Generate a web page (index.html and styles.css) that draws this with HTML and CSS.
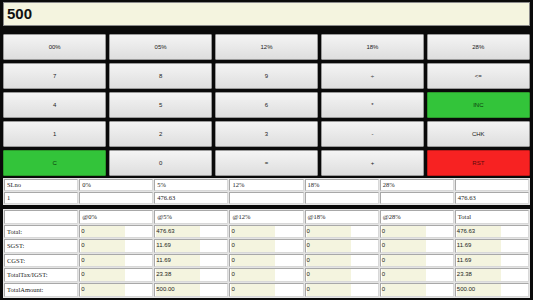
FILE: index.html
```html
<!DOCTYPE html>
<html>
<head>
<meta charset="utf-8">
<link rel="stylesheet" href="styles.css">
</head>
<body>
<div class="app">
  <div class="display">500</div>
  <div class="keys">
    <button class="key">00%</button>
    <button class="key">05%</button>
    <button class="key">12%</button>
    <button class="key">18%</button>
    <button class="key">28%</button>
    <button class="key">7</button>
    <button class="key">8</button>
    <button class="key">9</button>
    <button class="key">÷</button>
    <button class="key">&lt;=</button>
    <button class="key">4</button>
    <button class="key">5</button>
    <button class="key">6</button>
    <button class="key">*</button>
    <button class="key green">INC</button>
    <button class="key">1</button>
    <button class="key">2</button>
    <button class="key">3</button>
    <button class="key">-</button>
    <button class="key">CHK</button>
    <button class="key green">C</button>
    <button class="key">0</button>
    <button class="key">=</button>
    <button class="key">+</button>
    <button class="key red">RST</button>
  </div>
  <div class="sheet">
    <table class="grid small">
      <tr><td>SLno</td><td>0%</td><td>5%</td><td>12%</td><td>18%</td><td>28%</td><td></td></tr>
      <tr><td>1</td><td></td><td>476.63</td><td></td><td></td><td></td><td>476.63</td></tr>
    </table>
  </div>
  <div class="sheet second">
    <table class="grid big">
      <tr><td></td><td>@0%</td><td>@5%</td><td>@12%</td><td>@18%</td><td>@28%</td><td>Total</td></tr>
      <tr><td>Total:</td><td><span class="val">0</span></td><td><span class="val">476.63</span></td><td><span class="val">0</span></td><td><span class="val">0</span></td><td><span class="val">0</span></td><td><span class="val">476.63</span></td></tr>
      <tr><td>SGST:</td><td><span class="val">0</span></td><td><span class="val">11.69</span></td><td><span class="val">0</span></td><td><span class="val">0</span></td><td><span class="val">0</span></td><td><span class="val">11.69</span></td></tr>
      <tr><td>CGST:</td><td><span class="val">0</span></td><td><span class="val">11.69</span></td><td><span class="val">0</span></td><td><span class="val">0</span></td><td><span class="val">0</span></td><td><span class="val">11.69</span></td></tr>
      <tr><td>TotalTax/IGST:</td><td><span class="val">0</span></td><td><span class="val">23.38</span></td><td><span class="val">0</span></td><td><span class="val">0</span></td><td><span class="val">0</span></td><td><span class="val">23.38</span></td></tr>
      <tr><td>TotalAmount:</td><td><span class="val">0</span></td><td><span class="val">500.00</span></td><td><span class="val">0</span></td><td><span class="val">0</span></td><td><span class="val">0</span></td><td><span class="val">500.00</span></td></tr>
    </table>
  </div>
</div>
</body>
</html>
```

FILE: styles.css
```css
html, body {
  margin: 0;
  padding: 0;
  background: #111;
}
.app {
  width: 533px;
  height: 300px;
  box-sizing: border-box;
  background: #0a0a0a;
  padding: 2px 3px 3px 3px;
  display: flex;
  flex-direction: column;
  overflow: hidden;
}
.display {
  height: 24px;
  box-sizing: border-box;
  background: #f4f4df;
  border: 1px solid #8a8a8a;
  font-family: "Liberation Sans", Arial, sans-serif;
  font-size: 15px;
  font-weight: bold;
  color: #111;
  line-height: 22px;
  padding-left: 3px;
}
.keys {
  margin-top: 8px;
  display: grid;
  grid-template-columns: repeat(5, 1fr);
  grid-template-rows: repeat(5, 26px);
  column-gap: 2.5px;
  row-gap: 3px;
}
.key {
  margin: 0;
  padding: 0;
  border: 1px solid #9a9a9a;
  border-radius: 1px;
  background: linear-gradient(#f4f4f4, #dedede);
  font-family: "Liberation Sans", Arial, sans-serif;
  font-size: 6px;
  color: #222;
}
.key.green {
  background: #33c43a;
  border-color: #2a9a2a;
  color: #0c3a0c;
}
.key.red {
  background: #f72222;
  border-color: #c01818;
  color: #5a0c0c;
}
.sheet {
  margin-top: 2px;
  background: #e4e4e4;
}
.sheet.second {
  margin-top: 4px;
  flex: 1;
}
.grid {
  width: 100%;
  table-layout: fixed;
  border-collapse: separate;
  border-spacing: 1px 1px;
  font-family: "Liberation Serif", "Times New Roman", serif;
  font-size: 6.5px;
  color: #222;
}
.grid td {
  background: #fff;
  border: 1px solid #a8a8a8;
  border-right-color: #d8d8d8;
  border-bottom-color: #d8d8d8;
  padding: 0 0 0 2px;
  white-space: nowrap;
  overflow: hidden;
  vertical-align: middle;
}
.small td {
  height: 10px;
  line-height: 10px;
}
.big td {
  height: 11.6px;
  line-height: 11.6px;
}
.val {
  display: block;
  width: 44px;
  height: 11.6px;
  line-height: 11.6px;
  margin-left: -1px;
  background: #f4f4df;
  font-family: "Liberation Sans", Arial, sans-serif;
  font-size: 6px;
  color: #222;
}
```
